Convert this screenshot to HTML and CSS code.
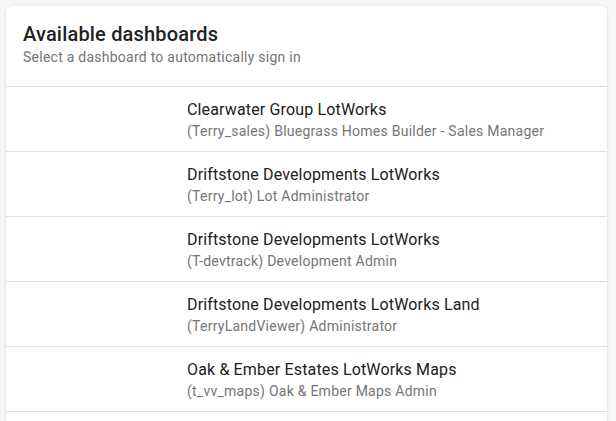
FILE: index.html
```html
<!DOCTYPE html>
<html lang="en">
<head>
    <meta charset="UTF-8">
    <meta name="viewport" content="width=device-width, initial-scale=1.0">
    <title>Available dashboards</title>
    <link rel="stylesheet" href="styles.css">
</head>
<body>
    <div class="card">
        <div class="card-header">
            <h1>Available dashboards</h1>
            <p>Select a dashboard to automatically sign in</p>
        </div>

        <!-- список дашбордів -->
        <ul class="dash-list">
            <li class="dash-item">
                <div class="dash-logo"></div>
                <div class="dash-text">
                    <div class="dash-name">Clearwater Group LotWorks</div>
                    <div class="dash-role">(Terry_sales) Bluegrass Homes Builder - Sales Manager</div>
                </div>
            </li>
            <li class="dash-item">
                <div class="dash-logo"></div>
                <div class="dash-text">
                    <div class="dash-name">Driftstone Developments LotWorks</div>
                    <div class="dash-role">(Terry_lot) Lot Administrator</div>
                </div>
            </li>
            <li class="dash-item">
                <div class="dash-logo"></div>
                <div class="dash-text">
                    <div class="dash-name">Driftstone Developments LotWorks</div>
                    <div class="dash-role">(T-devtrack) Development Admin</div>
                </div>
            </li>
            <li class="dash-item">
                <div class="dash-logo"></div>
                <div class="dash-text">
                    <div class="dash-name">Driftstone Developments LotWorks Land</div>
                    <div class="dash-role">(TerryLandViewer) Administrator</div>
                </div>
            </li>
            <li class="dash-item">
                <div class="dash-logo"></div>
                <div class="dash-text">
                    <div class="dash-name">Oak &amp; Ember Estates LotWorks Maps</div>
                    <div class="dash-role">(t_vv_maps) Oak &amp; Ember Maps Admin</div>
                </div>
            </li>
        </ul>
    </div>
</body>
</html>
```

FILE: styles.css
```css
html, body {
    overflow: hidden;
}
body {
    font-family: Roboto, 'Liberation Sans', sans-serif;
    background-color: #f5f7f6;
    color: #212121;
    margin: 0;
    padding: 6px 9px 0 6px;
}
.card {
    background-color: #ffffff;
    border-radius: 6px;
    box-shadow: 0 1px 3px rgba(0, 0, 0, 0.14), 0 0 1px rgba(0, 0, 0, 0.08);
    padding-bottom: 20px;
}
.card-header {
    padding: 16px 16px 19px 17px;
}
.card-header h1 {
    margin: 0;
    font-size: 20px;
    line-height: 24px;
    font-weight: 500;
    letter-spacing: 0.18px;
    color: #212121;
}
.card-header p {
    margin: 1px 0 0;
    font-size: 14px;
    line-height: 20px;
    letter-spacing: 0.25px;
    color: #757575;
}

.dash-list {
    list-style: none;
    margin: 0;
    padding: 0;
    border-top: 1px solid #e0e0e0;
}
.dash-item {
    display: flex;
    align-items: center;
    height: 64px;
    border-bottom: 1px solid #e0e0e0;
    cursor: pointer;
}
.dash-logo {
    width: 181px;
    flex-shrink: 0;
}
.dash-text {
    padding-top: 1px;
}
.dash-name {
    font-size: 16px;
    line-height: 22px;
    letter-spacing: 0.15px;
    color: #212121;
}
.dash-role {
    font-size: 14px;
    line-height: 20px;
    letter-spacing: 0.25px;
    color: #757575;
}
```
